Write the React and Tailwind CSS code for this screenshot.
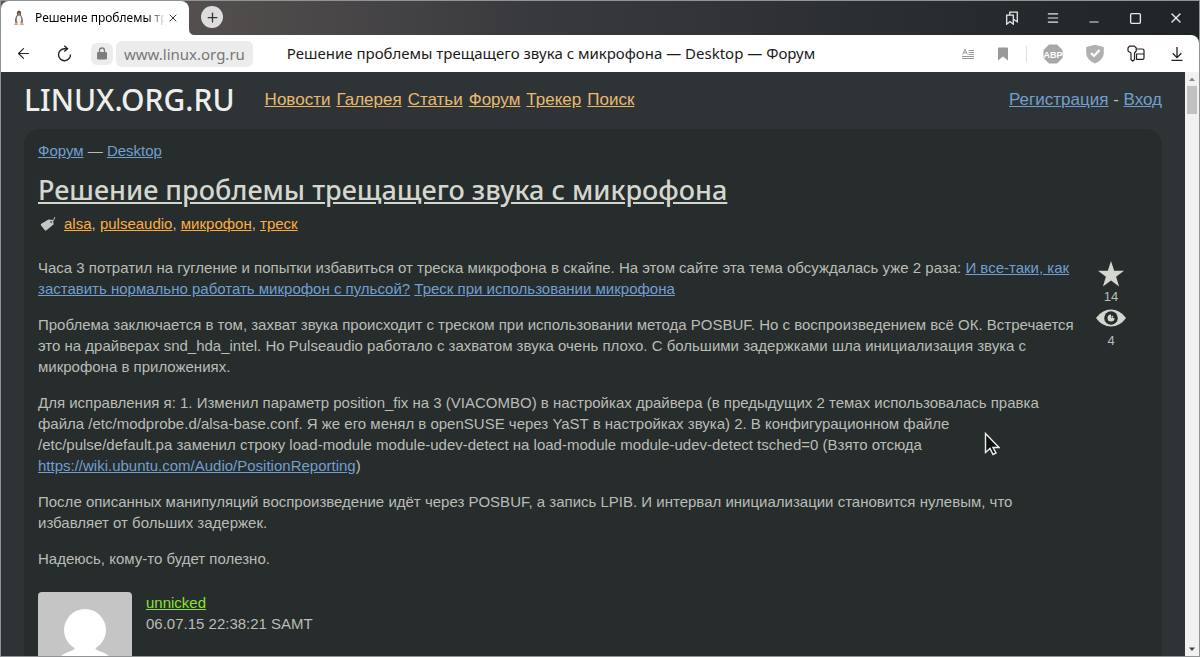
/**
 * Forum topic page shown inside a desktop browser window
 */
import { useState } from "react";
import { ArrowLeft, Menu, Minus, Plus, Square, X } from "lucide-react";

const NAV = ["Новости", "Галерея", "Статьи", "Форум", "Трекер", "Поиск"];
const TAGS = ["alsa", "pulseaudio", "микрофон", "треск"];

function PenguinIcon() {
  return (
    <svg viewBox="0 0 12 16" className="h-4 w-3">
      <ellipse cx="6" cy="3" rx="2.2" ry="2.6" fill="#5c534c" />
      <path d="M4 5C2 8 1.600 10 2.400 13h7.200C10.400 10 9.600 8 8 5z" fill="#75675e" />
      <ellipse cx="6" cy="9.500" rx="2.300" ry="4" fill="#f6f2ee" />
      <path d="M4.800 3.500h2.400L6 5z" fill="#e0a070" />
      <path d="M1.500 14.500 3 12.500l2 2zM7 14.500l2-2 1.500 2z" fill="#d9a58a" stroke="#d9a58a" />
    </svg>
  );
}

function ReloadIcon() {
  return (
    <svg viewBox="0 0 16 18" className="h-[18px] w-4" fill="none" stroke="#222" strokeWidth="1.400">
      <path d="M13.500 9.500A6 6 0 1 1 7.500 3.700h3" />
      <path d="M7.300.8 10.500 3.700 7.300 6.600" />
    </svg>
  );
}

function LockIcon() {
  return (
    <svg viewBox="0 0 10 13" className="h-[13px] w-[10px]">
      <path d="M2.500 6V3.500a2.500 2.500 0 0 1 5 0V6" fill="none" stroke="#7d7d7d" strokeWidth="1.300" />
      <rect y="5" width="10" height="7.500" rx="1.200" fill="#7d7d7d" />
    </svg>
  );
}

function CollectionsIcon() {
  return (
    <svg viewBox="0 0 14 14" className="size-[14px]" fill="none" stroke="#e6e8e9" strokeWidth="1.300">
      <path d="M1.700 4.200h6.600v9L5 10.600l-3.300 2.600z" />
      <path d="M4.800 4V1.200h7.500v9.500L8.800 8.500" />
    </svg>
  );
}

function ReaderIcon() {
  return (
    <svg viewBox="0 0 12 12" className="size-3" fill="none" stroke="#9b9b9b">
      <path d="M.7 6.500 3 1.200l2.300 5.300M1.500 4.700h3M6.500 2.500H12M6.500 4.500H12M6.500 6.500H12M0 8.500h12M0 10.500h12" />
    </svg>
  );
}

function AbpIcon() {
  return (
    <svg viewBox="0 0 20 20" className="size-5">
      <path d="M6 .5h8L19.500 6v8L14 19.500H6L.5 14V6z" fill="#a8a8a8" />
      <text x="10" y="13.500" textAnchor="middle" fontSize="9" fontWeight="700" fontFamily="Liberation Sans, sans-serif" fill="#fff">ABP</text>
    </svg>
  );
}

function ShieldIcon() {
  return (
    <svg viewBox="0 0 20 20" className="size-5">
      <path d="M10 .7 18.800 3v5.500c0 5.200-4 9-8.800 10.900C5.200 17.500 1.200 13.700 1.200 8.500V3z" fill="#b0b0b0" />
      <path d="m6 9 3 3 5.500-6" fill="none" stroke="#fff" strokeWidth="2.200" />
    </svg>
  );
}

function PasswordsIcon() {
  return (
    <svg viewBox="0 0 18 17" className="h-[17px] w-[18px]" fill="none" stroke="#222" strokeWidth="1.200">
      <path d="M2.500 1.200h5L9.200 3v3L7.500 8v6.500L5.700 16.200 4 14.500V8L1 6V3z" strokeLinejoin="round" />
      <path d="M9.200 4h6.300q1.500 0 1.500 1.500v7.500q0 1.300-1.300 1.300H9.500V9H17" strokeLinejoin="round" />
    </svg>
  );
}

function DownloadIcon() {
  return (
    <svg viewBox="0 0 12 14" className="h-[14px] w-3" fill="none" stroke="#222" strokeWidth="1.300">
      <path d="M6 0v10.500M1.700 6.300 6 10.600l4.300-4.300M.5 13.300h11" />
    </svg>
  );
}

function TagIcon() {
  return (
    <svg viewBox="0 0 16 16" className="size-4">
      <path d="M1.300 7.700 8.500 3.500l4.700.5.300 4.500-7 5.800q-1 .8-1.800-.2L1 9.500q-.7-1.200.3-1.800z" fill="#c4c7c0" />
      <circle cx="11.300" cy="6" r=".9" fill="#272c2d" />
      <path d="M11.300 6q3.300-1.500 3.500-5" fill="none" stroke="#babdb6" />
    </svg>
  );
}

function StarIcon() {
  return (
    <svg viewBox="0 0 26 26" className="size-[26px]">
      <path d="m13 0 3.200 9.800H26l-7.900 6 3 9.700-8.100-6-8.100 6 3-9.700-7.900-6h9.800z" fill="#d3d7cf" />
    </svg>
  );
}

function EyeIcon() {
  return (
    <svg viewBox="0 0 30 18" className="h-[18px] w-[30px]">
      <path d="M0 9Q6 .5 15 .5T30 9q-6 8.500-15 8.500T0 9z" fill="#d3d7cf" />
      <circle cx="15" cy="9" r="6.800" fill="#272c2d" />
      <circle cx="15" cy="9" r="3.500" fill="#d3d7cf" />
      <path d="M15 9V4.500h4.500V9z" fill="#272c2d" />
      <circle cx="16.300" cy="7.800" r="1" fill="#d3d7cf" />
    </svg>
  );
}

function Avatar() {
  return (
    <svg viewBox="0 0 94 94" className="size-[94px] shrink-0 rounded">
      <rect width="94" height="94" fill="#c5c5c5" />
      <path d="M37 54h20q0 4 4 5c14 4 22 16 22 35H11c0-19 8-31 22-35q4-1 4-5z" fill="#fff" />
      <circle cx="47" cy="38" r="21" fill="#fff" />
    </svg>
  );
}

function Link({ children, className = "text-[#729fcf]" }) {
  return <a href="#" className={`underline ${className}`}>{children}</a>;
}

function TabStrip() {
  return (
    <div className="flex h-[34px] items-start">
      <div className="relative flex h-full w-[188px] items-center rounded-t-lg bg-white pr-2 pl-3">
        <PenguinIcon />
        <span className="ml-[10px] w-[130px] overflow-hidden bg-linear-to-r from-black from-85% to-white bg-clip-text font-['Noto_Sans'] text-[12px] whitespace-nowrap text-transparent">
          Решение проблемы трещащего звука
        </span>
        <button aria-label="Закрыть вкладку" className="ml-[2px]"><X size={12} strokeWidth={2} color="#333" /></button>
        <svg viewBox="0 0 6 6" className="absolute bottom-0 left-full size-[6px]">
          <path d="M0 0q0 6 6 6H0z" fill="#fff" />
        </svg>
      </div>
      <button aria-label="Новая вкладка" className="mt-[5px] ml-3 grid size-[22px] place-items-center rounded-full bg-[#dedddd]">
        <Plus size={15} strokeWidth={2} color="#333" />
      </button>
      <div className="mt-2 mr-[15px] ml-auto flex h-[18px] items-center gap-[25px] text-[#e6e8e9]">
        <button aria-label="Коллекции" className="grid w-4 place-items-center"><CollectionsIcon /></button>
        <button aria-label="Меню" className="grid w-4 place-items-center"><Menu size={14} /></button>
        <button aria-label="Свернуть" className="grid w-4 place-items-center pt-2"><Minus size={14} /></button>
        <button aria-label="Развернуть" className="grid w-4 place-items-center">
          <Square size={13} strokeWidth={2.5} strokeLinejoin="miter" />
        </button>
        <button aria-label="Закрыть" className="grid w-4 place-items-center"><X size={16} /></button>
      </div>
    </div>
  );
}

function Toolbar() {
  const [title, setTitle] = useState("Решение проблемы трещащего звука с микрофона — Desktop — Форум");

  return (
    <div className="flex h-[37px] items-center rounded-tr-lg bg-white pr-4 pl-[14px] font-['Noto_Sans']">
      <button aria-label="Назад"><ArrowLeft size={17} strokeWidth={1.6} color="#222" /></button>
      <button aria-label="Обновить" className="ml-[25px]"><ReloadIcon /></button>
      <button aria-label="Защита" className="ml-[18px] grid h-[22px] w-[22px] place-items-center rounded-md bg-[#ececec]">
        <LockIcon />
      </button>
      <button className="ml-[3px] h-[26px] rounded-md bg-[#ececec] px-2 text-[15px] leading-[24px] text-[#777]">
        www.linux.org.ru
      </button>
      <input
        aria-label="Адрес"
        className="ml-[34px] h-[26px] min-w-0 flex-1 pb-[2px] text-[15px] text-[#1a1a1a] outline-none"
        value={title}
        onChange={(e) => setTitle(e.target.value)}
      />
      <button aria-label="Режим чтения" className="ml-5"><ReaderIcon /></button>
      <button aria-label="В закладки" className="ml-6">
        <svg viewBox="0 0 10 14" className="h-[14px] w-[10px]">
          <path d="M0 1.500Q0 .5 1 .5h8q1 0 1 1v12l-5-4-5 4z" fill="#999" />
        </svg>
      </button>
      <span className="ml-[18px] h-4 w-px bg-[#ddd]" />
      <button aria-label="Adblock Plus" className="ml-4"><AbpIcon /></button>
      <button aria-label="Protect" className="ml-[22px]"><ShieldIcon /></button>
      <button aria-label="Пароли" className="ml-[22px]"><PasswordsIcon /></button>
      <button aria-label="Загрузки" className="ml-[26px]"><DownloadIcon /></button>
    </div>
  );
}

function Scrollbar() {
  return (
    <div className="flex w-[14px] shrink-0 flex-col items-center bg-[#f1f1f1]">
      <svg viewBox="0 0 14 14" className="size-[14px]"><path d="M4 9h6L7 5.500z" fill="#888" /></svg>
      <div className="h-7 w-[10px] bg-[#c1c1c1]" />
      <svg viewBox="0 0 14 14" className="mt-auto size-[14px]"><path d="M4 5.500h6L7 9z" fill="#444" /></svg>
    </div>
  );
}

function Topic() {
  return (
    <article className="mt-[9px] rounded-2xl bg-[#272c2d] px-[14px] pt-[11px] pb-[14px] text-[15px] leading-[21px] text-[#babdb6]">
      <div>
        <Link>Форум</Link> — <Link>Desktop</Link>
      </div>
      <h1 className="mt-[11px] font-['Noto_Sans'] text-[27px] leading-[36px] font-medium">
        <Link className="text-[#d3d7cf]">Решение проблемы трещащего звука с микрофона</Link>
      </h1>
      <div className="mt-[5px] flex items-center">
        <span className="mr-2 ml-[2px]"><TagIcon /></span>
        <p>
          {TAGS.map((tag, i) => (
            <span key={tag}>
              {i > 0 && ", "}
              <Link className="text-[#fcaf3e]">{tag}</Link>
            </span>
          ))}
        </p>
      </div>

      <div className="mt-[23px] flex">
        <div className="flex-1 space-y-[15px]">
          <p>
            Часа 3 потратил на гугление и попытки избавиться от треска микрофона в скайпе. На этом сайте эта тема
            обсуждалась уже 2 раза: <Link>И все-таки, как заставить нормально работать микрофон с пульсой?</Link>{" "}
            <Link>Треск при использовании микрофона</Link>
          </p>
          <p>
            Проблема заключается в том, захват звука происходит с треском при использовании метода POSBUF. Но с
            воспроизведением всё ОК. Встречается это на драйверах snd_hda_intel. Но Pulseaudio работало с захватом
            звука очень плохо. С большими задержками шла инициализация звука с микрофона в приложениях.
          </p>
          <p>
            Для исправления я: 1. Изменил параметр position_fix на 3 (VIACOMBO) в настройках драйвера (в предыдущих 2
            темах использовалась правка файла /etc/modprobe.d/alsa-base.conf. Я же его менял в openSUSE через YaST в
            настройках звука) 2. В конфигурационном файле /etc/pulse/default.pa заменил строку load-module
            module-udev-detect на load-module module-udev-detect tsched=0 (Взято отсюда{" "}
            <Link>https://wiki.ubuntu.com/Audio/PositionReporting</Link>)
          </p>
          <p>
            После описанных манипуляций воспроизведение идёт через POSBUF, а запись LPIB. И интервал инициализации
            становится нулевым, что избавляет от больших задержек.
          </p>
          <p>Надеюсь, кому-то будет полезно.</p>
        </div>
        <div className="mr-[14px] ml-3 flex w-[46px] flex-col items-center pt-1 text-[13px] leading-[19px]">
          <button aria-label="В избранное"><StarIcon /></button>
          <span>14</span>
          <button aria-label="Отслеживать" className="mt-[3px]"><EyeIcon /></button>
          <span className="mt-1">4</span>
        </div>
      </div>

      <div className="mt-[23px] flex gap-[14px]">
        <Avatar />
        <div>
          <Link className="text-[#8ae234]">unnicked</Link>
          <p>06.07.15 22:38:21 SAMT</p>
        </div>
      </div>
    </article>
  );
}

export default function App() {
  return (
    <div className="relative flex h-screen flex-col overflow-hidden border border-[#8f9494] bg-[#2e3436] font-['Liberation_Sans',sans-serif]">
      <div className="bg-linear-to-r from-[#5a5452] from-10% via-[#38393d] via-45% to-[#1f2426]">
        <TabStrip />
        <Toolbar />
      </div>
      <div className="flex min-h-0 flex-1">
        <div className="min-w-0 flex-1 overflow-hidden px-[23px]">
          <header className="flex h-12 items-center pt-2">
            <h2 className="font-['Noto_Sans'] text-[30px] leading-[40px] font-medium text-[#eeeeec]">LINUX.ORG.RU</h2>
            <nav className="ml-[30px] flex gap-[6px] text-[17px]">
              {NAV.map((item) => (
                <Link key={item} className="text-[#e9b96e]">{item}</Link>
              ))}
            </nav>
            <p className="ml-auto text-[17px] text-[#babdb6]">
              <Link>Регистрация</Link> - <Link>Вход</Link>
            </p>
          </header>
          <main><Topic /></main>
        </div>
        <Scrollbar />
      </div>

      {/* Mouse pointer */}
      <svg viewBox="0 0 16 24" className="absolute top-[431px] left-[983px] h-6 w-4">
        <path d="M1.500 1.500v19l4.500-4 3 6 3-1.500-3-5.500h6z" fill="#111" stroke="#eee" strokeWidth="1.400" />
      </svg>
    </div>
  );
}
